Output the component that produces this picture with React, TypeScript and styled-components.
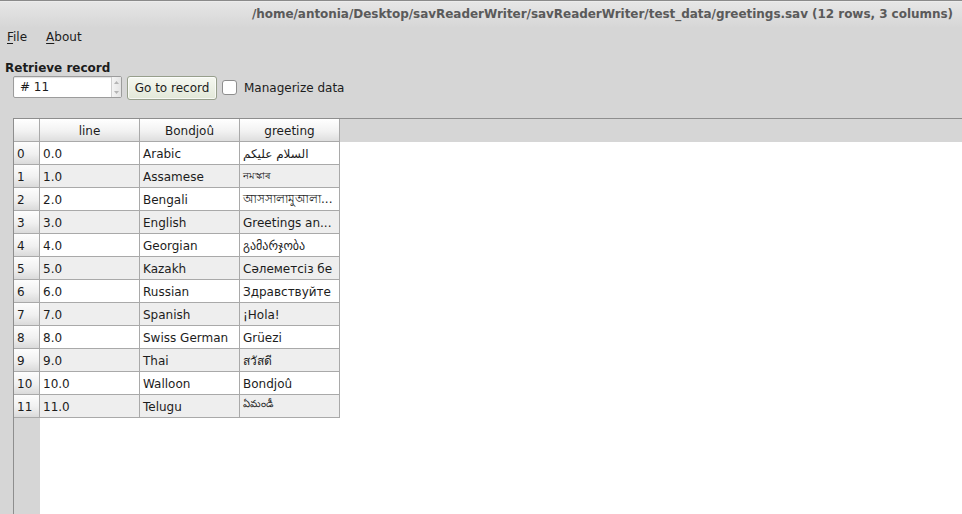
import React from "react";
import styled, { createGlobalStyle } from "styled-components";

const Global = createGlobalStyle`
  html, body { margin: 0; padding: 0; background: #d6d6d6; }
  body { font-family: "DejaVu Sans", "Noto Sans", sans-serif; font-size: 12px; color: #1c1c1c; }
  * { box-sizing: border-box; }
`;

const Window = styled.div`
  width: 962px;
  height: 514px;
  display: flex;
  flex-direction: column;
  overflow: hidden;
  background: #d6d6d6;
`;

const TitleBar = styled.div`
  height: 28px;
  flex: none;
  border-top: 1px solid #8a8a8a;
  background: linear-gradient(#f2f2f2 0px, #e6e6e6 1px, #d6d6d6 100%);
  display: flex;
  align-items: center;
  justify-content: flex-end;
  padding: 0 9px 1px 0;
  font-weight: bold;
  color: #5a5a5a;
  letter-spacing: -0.04px;
  white-space: nowrap;
`;

const MenuBar = styled.div`
  height: 18px;
  flex: none;
  display: flex;
  align-items: center;
  gap: 19px;
  padding-left: 7px;
`;

const MenuItem = styled.span`
  line-height: 14px;
  u { text-decoration-thickness: 1px; text-underline-offset: 2px; }
`;

const GroupLabel = styled.div`
  margin-top: 15px;
  height: 14px;
  line-height: 14px;
  padding-left: 5px;
  font-weight: bold;
  flex: none;
`;

const Controls = styled.div`
  margin-top: 1px;
  height: 23px;
  flex: none;
  display: flex;
  align-items: center;
  padding-left: 13px;
`;

const SpinBox = styled.div`
  width: 109px;
  height: 22px;
  align-self: flex-start;
  display: flex;
  background: #fff;
  border: 1px solid #9c9c9c;
  border-radius: 2px;
  box-shadow: inset 0 1px 1px rgba(0,0,0,0.12);
`;

const SpinText = styled.div`
  flex: 1;
  padding-left: 6px;
  display: flex;
  align-items: center;
`;

const SpinButtons = styled.div`
  width: 10px;
  display: flex;
  flex-direction: column;
  border-left: 1px solid #cfcfcf;
  background: linear-gradient(90deg, #f4f4f4, #e4e4e4);
`;

const SpinArrow = styled.div`
  flex: 1;
  display: flex;
  align-items: center;
  justify-content: center;
`;

const PushButton = styled.button`
  margin-left: 5px;
  width: 90px;
  height: 24px;
  align-self: flex-start;
  font: inherit;
  color: #1c1c1c;
  border: 1px solid #979f8c;
  border-radius: 3px;
  background: linear-gradient(#f6f8f1, #e2e8d8);
  box-shadow: inset 0 0 0 1px rgba(255,255,255,0.7);
  padding: 0;
`;

const CheckBox = styled.span`
  margin-left: 5px;
  width: 15px;
  height: 15px;
  border: 1px solid #8e8e8e;
  border-radius: 3px;
  background: #fff;
`;

const CheckLabel = styled.span`
  margin-left: 7px;
`;

const TableFrame = styled.div`
  margin-top: 19px;
  margin-left: 13px;
  flex: 1;
  display: flex;
  flex-direction: column;
  border-top: 1px solid #8e8e8e;
  border-left: 1px solid #8e8e8e;
  min-height: 0;
`;

const HeaderRow = styled.div`
  display: flex;
  height: 23px;
  flex: none;
  background: #d6d6d6;
`;

const HeadCell = styled.div<{ $w: number }>`
  width: ${(p) => p.$w}px;
  height: 23px;
  border-right: 1px solid #a9a9a9;
  border-bottom: 1px solid #a9a9a9;
  background: linear-gradient(#ffffff, #f2f2f2 55%, #dedede);
  display: flex;
  align-items: center;
  justify-content: center;
  padding-top: 1px;
`;

const Body = styled.div`
  flex: 1;
  display: flex;
  min-height: 0;
`;

const RowHeader = styled.div`
  width: 26px;
  flex: none;
  display: flex;
  flex-direction: column;
  background: #d6d6d6;
`;

const RowHeadCell = styled.div`
  height: 23px;
  border-right: 1px solid #a9a9a9;
  border-bottom: 1px solid #a9a9a9;
  background: linear-gradient(#fdfdfd, #f0f0f0 55%, #dadada);
  padding: 1px 0 0 3px;
  display: flex;
  align-items: center;
`;

const Viewport = styled.div`
  flex: 1;
  background: #fff;
  display: flex;
  flex-direction: column;
`;

const DataRow = styled.div`
  display: flex;
  height: 23px;
`;

const DataCell = styled.div<{ $alt: boolean; $small?: boolean }>`
  width: 100px;
  height: 23px;
  border-right: 1px solid #a9a9a9;
  border-bottom: 1px solid #a9a9a9;
  background: ${(p) => (p.$alt ? "#eeeeee" : "#ffffff")};
  padding-left: 3px;
  display: flex;
  align-items: ${(p) => (p.$small ? "flex-start" : "center")};
  padding-top: ${(p) => (p.$small ? "3px" : "1px")};
  font-size: ${(p) => (p.$small ? "10px" : "12px")};
  white-space: nowrap;
  overflow: hidden;
`;

const rows: [string, string, string, boolean?][] = [
  ["0.0", "Arabic", "السلام عليكم"],
  ["1.0", "Assamese", "নমস্কাৰ", true],
  ["2.0", "Bengali", "আসসালামুআলা..."],
  ["3.0", "English", "Greetings an..."],
  ["4.0", "Georgian", "გამარჯობა"],
  ["5.0", "Kazakh", "Сәлеметсіз бе"],
  ["6.0", "Russian", "Здравствуйте"],
  ["7.0", "Spanish", "¡Hola!"],
  ["8.0", "Swiss German", "Grüezi"],
  ["9.0", "Thai", "สวัสดี"],
  ["10.0", "Walloon", "Bondjoû"],
  ["11.0", "Telugu", "ఏమండీ", true],
];

export default function App() {
  return (
    <Window>
      <Global />
      <TitleBar>
        /home/antonia/Desktop/savReaderWriter/savReaderWriter/test_data/greetings.sav (12 rows, 3 columns)
      </TitleBar>
      <MenuBar>
        <MenuItem><u>F</u>ile</MenuItem>
        <MenuItem><u>A</u>bout</MenuItem>
      </MenuBar>
      <GroupLabel>Retrieve record</GroupLabel>
      <Controls>
        <SpinBox>
          <SpinText># 11</SpinText>
          <SpinButtons>
            <SpinArrow>
              <svg width="5" height="3" viewBox="0 0 5 3"><path d="M0 3 L2.5 0 L5 3Z" fill="#b4b4b4" /></svg>
            </SpinArrow>
            <SpinArrow>
              <svg width="5" height="3" viewBox="0 0 5 3"><path d="M0 0 L2.5 3 L5 0Z" fill="#b4b4b4" /></svg>
            </SpinArrow>
          </SpinButtons>
        </SpinBox>
        <PushButton>Go to record</PushButton>
        <CheckBox />
        <CheckLabel>Managerize data</CheckLabel>
      </Controls>
      <TableFrame>
        <HeaderRow>
          <HeadCell $w={26} />
          <HeadCell $w={100}>line</HeadCell>
          <HeadCell $w={100}>Bondjoû</HeadCell>
          <HeadCell $w={100}>greeting</HeadCell>
        </HeaderRow>
        <Body>
          <RowHeader>
            {rows.map((_, i) => (
              <RowHeadCell key={i}>{i}</RowHeadCell>
            ))}
          </RowHeader>
          <Viewport>
            {rows.map((r, i) => (
              <DataRow key={i}>
                <DataCell $alt={i % 2 === 1}>{r[0]}</DataCell>
                <DataCell $alt={i % 2 === 1}>{r[1]}</DataCell>
                <DataCell $alt={i % 2 === 1} $small={!!r[3]}>
                  {r[2]}
                </DataCell>
              </DataRow>
            ))}
          </Viewport>
        </Body>
      </TableFrame>
    </Window>
  );
}
